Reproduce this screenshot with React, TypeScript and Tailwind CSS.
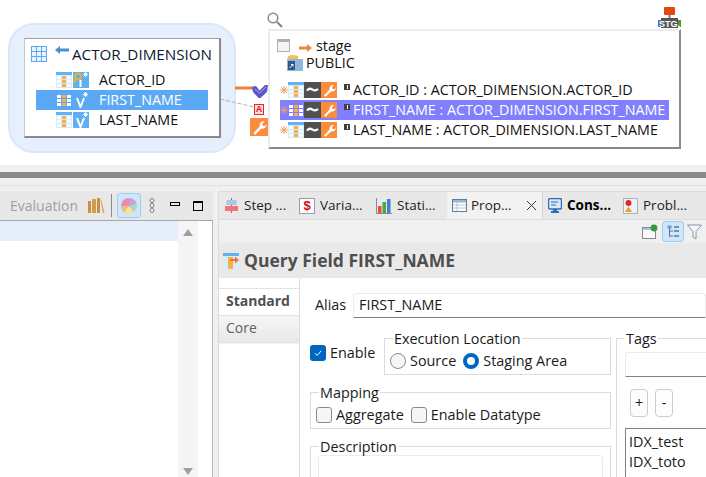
import type { ReactNode } from 'react';

const FONT = "'Open Sans', 'Noto Sans', sans-serif";

function GridIcon({ selected = false }: { selected?: boolean }) {
  return (
    <svg width="16" height="16" viewBox="0 0 16 16" className="shrink-0">
      {!selected && <rect x="0" y="0" width="16" height="16" fill="#d8ecfb" />}
      {!selected && <rect x="0" y="0" width="16" height="3" fill="#62b0ee" />}
      {[3, 7, 11].map((y) =>
        [1, 6, 11].map((x) => (
          <rect key={`${x}-${y}`} x={x} y={y + (selected ? 0 : 1)} width="4" height="3" fill={x === 6 ? '#f5b04c' : selected ? '#ffffff' : '#f7fbfe'} />
        ))
      )}
    </svg>
  );
}

function Wrench({ size = 16 }: { size?: number }) {
  return (
    <svg width={size} height={size} viewBox="0 0 16 16" className="shrink-0">
      <rect width="16" height="16" fill="#fb8c3c" />
      <path d="M3 13.5 L8.6 7.6 C8 5 10 2.6 13 3 L10.8 5.3 L11.6 7 L13.4 7.2 L14.6 5.4 C15 8.2 12.6 10 10 9.4 L4.6 14.8 Z" fill="#ffffff" />
    </svg>
  );
}

function Tilde() {
  return (
    <svg width="17" height="16" viewBox="0 0 17 16" className="shrink-0">
      <rect width="17" height="16" fill="#505050" />
      <path d="M3 8.6 C5 6 7 6.6 8.5 7.6 C10 8.6 12 9 14 7" stroke="#ffffff" strokeWidth="2.2" fill="none" />
    </svg>
  );
}

function BlueV({ selected = false, keyed = false }: { selected?: boolean; keyed?: boolean }) {
  return (
    <svg width="16" height="16" viewBox="0 0 16 16" className="shrink-0">
      {!selected && <rect width="16" height="16" fill="#62aef2" />}
      {keyed ? (
        <g>
          <rect x="6.5" y="8" width="2" height="7" fill="#ffffff" />
          <circle cx="5" cy="4.5" r="3" fill="none" stroke="#e2b43c" strokeWidth="2" />
          <path d="M3 7 L0.6 11" stroke="#e2b43c" strokeWidth="2" />
        </g>
      ) : (
        <path d="M4 6 L7.5 15 L11 6" stroke="#ffffff" strokeWidth="2" fill="none" />
      )}
      <path d="M12.5 0 V5 M10 2.5 H15 M10.8 0.8 L14.2 4.2 M14.2 0.8 L10.8 4.2" stroke="#ffffff" strokeWidth="0.9" />
    </svg>
  );
}

function Star() {
  return (
    <svg width="8" height="8" viewBox="0 0 8 8" className="shrink-0">
      <path d="M4 0 V8 M0 4 H8 M1.2 1.2 L6.8 6.8 M6.8 1.2 L1.2 6.8" stroke="#f59a58" strokeWidth="1" />
    </svg>
  );
}

function TBadge() {
  return (
    <span className="absolute left-[64px] top-[4px] flex h-[6px] w-[6px] items-center justify-center bg-[#404040]">
      <span className="block h-[4px] w-[1px] bg-white" />
    </span>
  );
}

function TargetRow({ label, selected = false }: { label: string; selected?: boolean }) {
  return (
    <div className={`relative flex h-[20px] items-center ${selected ? 'bg-[#8080ff] text-white' : 'text-[#111111]'}`}>
      <Star />
      <div className="flex">
        <GridIcon selected={selected} />
        <Tilde />
        <Wrench />
      </div>
      <TBadge />
      <span className="ml-[16px] whitespace-nowrap">{label}</span>
    </div>
  );
}

function SourceRow({ label, selected = false, keyed = false }: { label: string; selected?: boolean; keyed?: boolean }) {
  return (
    <div className={`flex h-[20px] items-center pl-[20px] ${selected ? 'bg-[#5ba8f5] text-white' : 'text-[#111111]'}`}>
      <GridIcon selected={selected} />
      <span className="ml-[1px]"><BlueV selected={selected} keyed={keyed} /></span>
      <span className="ml-[10px] whitespace-nowrap">{label}</span>
    </div>
  );
}

function Diagram() {
  return (
    <div className="relative h-[165px] bg-white text-[14.3px]">
      {/* source datastore */}
      <div className="absolute left-[8px] top-[23px] h-[130px] w-[228px] rounded-[26px] border-2 border-[#d8e8fa] bg-[#e6f0fc]" />
      <div className="absolute left-[24px] top-[38px] h-[100px] w-[197px] border-b-2 border-l border-r-2 border-t border-b-[#8a8a8a] border-l-[#c8c8c8] border-r-[#8a8a8a] border-t-[#a0a0a0] bg-white">
        <div className="flex h-[31px] items-center pb-[1px] pl-[6px] text-[#0b1c33]">
          <svg width="16" height="16" viewBox="0 0 16 16" className="shrink-0">
            <rect width="16" height="16" fill="#5ba8f5" />
            {[1, 6, 11].map((y) => [1, 6, 11].map((x) => <rect key={`${x}-${y}`} x={x} y={y} width="4" height="4" fill="#eaf4fe" />))}
          </svg>
          <svg width="14" height="10" viewBox="0 0 14 10" className="mb-[6px] ml-[8px] shrink-0">
            <path d="M0 4 L5 0 V2.5 H14 V5.5 H5 V8 Z" fill="#4d8fc9" />
          </svg>
          <span className="ml-[3px] whitespace-nowrap text-[15.2px]">ACTOR_DIMENSION</span>
        </div>
        <div className="mx-[11px]">
          <SourceRow label="ACTOR_ID" keyed />
          <SourceRow label="FIRST_NAME" selected />
          <SourceRow label="LAST_NAME" />
        </div>
      </div>

      {/* links */}
      <svg width="40" height="60" viewBox="0 0 40 60" className="absolute left-[220px] top-[80px]">
        <path d="M15 8 H36" stroke="#f0823c" strokeWidth="3" />
        <path d="M0 19 L34 27" stroke="#b0b0b0" strokeDasharray="4 2" />
      </svg>
      <svg width="16" height="14" viewBox="0 0 16 14" className="absolute left-[252px] top-[84px]">
        <path d="M0 3 L4 2 L7.5 6.5 L13 1 L16 1 L15 8 L8.5 14 H6.5 L1 8 Z" fill="#5d58c8" />
        <path d="M3 5 L7.5 9 L14 3" stroke="#a9a6ea" fill="none" />
      </svg>
      <span className="absolute left-[254px] top-[104px] flex h-[11px] w-[10px] items-center justify-center border border-[#e8252b] bg-[#ffd8d8] font-['Liberation_Sans'] text-[9px] font-bold leading-none text-[#d81c22]">
        A
      </span>
      <span className="absolute left-[250px] top-[118px]"><Wrench size={18} /></span>

      {/* magnifier */}
      <svg width="16" height="16" viewBox="0 0 16 16" className="absolute left-[267px] top-[12px]">
        <circle cx="6" cy="6" r="4.8" fill="#ffffff" stroke="#8c8c8c" strokeWidth="1.6" />
        <path d="M10 10 L15 15" stroke="#8c8c8c" strokeWidth="2.4" />
      </svg>

      {/* stg badge */}
      <svg width="23" height="21" viewBox="0 0 23 21" className="absolute left-[658px] top-[7px]">
        <rect x="6" y="0" width="11" height="8" rx="1" fill="#e2470f" />
        <rect x="10.5" y="8" width="2" height="5" fill="#777777" />
        <rect x="0" y="13" width="6" height="7" fill="#3d7fcc" />
        <rect x="17" y="13" width="6" height="7" fill="#4d9a2c" />
        <rect x="3" y="11" width="17" height="10" fill="#555555" />
        <text x="11.5" y="19.5" textAnchor="middle" fontSize="9" fontWeight="700" fill="#ffffff" fontFamily="Liberation Sans">STG.</text>
      </svg>

      {/* target datastore */}
      <div className="absolute left-[268px] top-[29px] h-[120px] w-[413px] border-2 border-b-[#8a8a8a] border-l-[#ececec] border-r-[#8a8a8a] border-t-[#ececec] bg-white pl-[10px] pt-[2px] text-[#111111]">
        <div className="flex h-[20px] items-center pt-[5px]">
          <span className="ml-[-3px] block h-[13px] w-[13px] border border-t-[3px] border-[#b0b0b0] bg-[#f4f4f4]" />
          <svg width="13" height="8" viewBox="0 0 13 8" className="ml-[9px] mt-[5px]">
            <path d="M0 2.5 H8 V0 L13 4 L8 8 V5.5 H0 Z" fill="#f0853f" />
          </svg>
          <span className="ml-[4px]">stage</span>
        </div>
        <div className="mt-[1px] flex h-[18px] items-center pl-[7px]">
          <svg width="16" height="16" viewBox="0 0 16 16">
            <ellipse cx="6" cy="2.5" rx="5.5" ry="2.5" fill="#f2c14e" />
            <rect x="0" y="4" width="16" height="12" fill="#8fb8dc" />
            <rect x="1" y="6" width="7" height="9" fill="#2b5a8c" />
            <path d="M2.5 13 L6 9.5 M4 9.5 H6 V11.5" stroke="#ffffff" />
          </svg>
          <span className="ml-[3px]">PUBLIC</span>
        </div>
        <div className="mr-[10px] mt-[8px]">
          <TargetRow label="ACTOR_ID : ACTOR_DIMENSION.ACTOR_ID" />
          <TargetRow label="FIRST_NAME : ACTOR_DIMENSION.FIRST_NAME" selected />
          <TargetRow label="LAST_NAME : ACTOR_DIMENSION.LAST_NAME" />
        </div>
      </div>
    </div>
  );
}

function StepIcon() {
  return (
    <svg width="15" height="15" viewBox="0 0 15 15" className="shrink-0">
      <rect x="7" y="0" width="1" height="15" fill="#777777" />
      <rect x="2.5" y="2" width="10" height="5" fill="#aac4ea" />
      <rect x="1" y="8" width="13" height="5" fill="#f2747c" />
    </svg>
  );
}

function LeftToolbar() {
  return (
    <div className="flex h-[30px] items-center border-b border-[#a8a8a8] bg-[#e8e8e8] pl-[10px]">
      <span className="text-[#a0a0a0]">Evaluation</span>
      <svg width="17" height="15" viewBox="0 0 17 15" className="ml-[10px]">
        <rect x="0" y="3" width="3" height="12" fill="#c9913f" />
        <rect x="4" y="1" width="4" height="14" fill="#d39c4c" />
        <rect x="9" y="0" width="3" height="15" fill="#c9913f" />
        <path d="M13 1 L16.5 15 H15 L12.5 2 Z" fill="#d39c4c" />
      </svg>
      <span className="ml-[6px] h-[23px] w-[1px] bg-[#8a8a8a]" />
      <span className="ml-[5px] flex h-[25px] w-[24px] items-center justify-center rounded-[3px] border border-[#9ccdf5] bg-[#cfe6fb]">
        <span className="block h-[16px] w-[16px] rounded-full bg-[conic-gradient(#c9a0dc_0_20%,#a8dcc0_20%_40%,#f5e39a_40%_60%,#ebc078_60%_75%,#e88cb0_75%_100%)]" />
      </span>
      <svg width="6" height="15" viewBox="0 0 6 15" className="ml-[8px]">
        {[2.5, 7.5, 12.5].map((y) => <circle key={y} cx="3" cy={y} r="1.9" fill="#ffffff" stroke="#707070" />)}
      </svg>
      <span className="mb-[4px] ml-[15px] h-[4px] w-[10px] border border-black" />
      <span className="ml-[13px] h-[10px] w-[10px] border border-t-2 border-black" />
    </div>
  );
}

function LeftPanel() {
  return (
    <div className="flex w-[213px] flex-col">
      <LeftToolbar />
      <div className="flex min-h-0 flex-1 border-r border-[#b8b8b8] bg-white">
        <div className="h-[20px] w-[178px] bg-[#e5effb]" />
        <div className="flex h-full w-[20px] flex-col items-center justify-between bg-[#f5f5f5] pb-[2px] pt-[8px]">
          <span className="block h-0 w-0 border-x-[5px] border-b-[7px] border-x-transparent border-b-[#a0a0a0]" />
          <span className="block h-0 w-0 border-x-[5px] border-t-[7px] border-x-transparent border-t-[#a0a0a0]" />
        </div>
      </div>
    </div>
  );
}

function Tab({ icon, label, width, bold = false }: { icon: ReactNode; label: string; width: number; bold?: boolean }) {
  return (
    <div className={`flex shrink-0 items-center pl-[5px] ${bold ? 'font-bold text-black' : 'text-[#222222]'}`} style={{ width }}>
      {icon}
      <span className="ml-[5px] whitespace-nowrap text-[13.5px]">{label}</span>
    </div>
  );
}

function TabBar() {
  return (
    <div className="flex h-[29px] items-stretch border-b border-t border-[#dcdcdc] bg-[#e8e8e8]">
      <Tab width={75} label="Step ..." icon={<StepIcon />} />
      <Tab width={77} label="Varia..." icon={
        <span className="flex h-[16px] w-[16px] items-center justify-center border border-[#9a9ab8] bg-white font-['Liberation_Sans'] text-[13px] font-bold leading-none text-[#d01010]">$</span>
      } />
      <Tab width={76} label="Stati..." icon={
        <svg width="16" height="16" viewBox="0 0 16 16" className="shrink-0">
          <path d="M0.5 0 V15.5 H16" stroke="#888888" fill="none" />
          <rect x="2" y="8" width="3.5" height="7" fill="#e8502a" />
          <rect x="6.5" y="4" width="3.5" height="11" fill="#49a83c" />
          <rect x="11" y="1" width="3.5" height="14" fill="#3f7fd0" />
        </svg>
      } />
      <div className="flex w-[96px] shrink-0 items-center border-r border-[#d4d4d4] bg-[#f2f2f2] pl-[5px] text-[#222222]">
        <svg width="15" height="13" viewBox="0 0 15 13" className="shrink-0">
          <rect x="0.5" y="0.5" width="14" height="12" fill="#ffffff" stroke="#5f7a9a" />
          <rect x="1" y="1" width="13" height="2.5" fill="#9fb6d0" />
          <path d="M1 6 H14 M1 9 H14 M5 3 V12" stroke="#b4c4d6" />
        </svg>
        <span className="ml-[4px] whitespace-nowrap text-[13.5px]">Prop...</span>
        <svg width="11" height="11" viewBox="0 0 11 11" className="ml-[14px] shrink-0">
          <path d="M1 1 L10 10 M10 1 L1 10" stroke="#333333" />
        </svg>
      </div>
      <Tab width={75} bold label="Cons..." icon={
        <svg width="14" height="15" viewBox="0 0 14 15" className="shrink-0">
          <rect x="0.5" y="0.5" width="13" height="10.5" rx="1.5" fill="#dbe8f6" stroke="#2f6fb5" strokeWidth="1.4" />
          <path d="M3 4 H10 M3 7 H8" stroke="#2f6fb5" />
          <path d="M5 11 H9 V13 H11 V15 H3 V13 H5 Z" fill="#2f6fb5" />
        </svg>
      } />
      <Tab width={70} label="Probl..." icon={
        <svg width="15" height="16" viewBox="0 0 15 16" className="shrink-0">
          <rect x="0.5" y="0.5" width="14" height="15" fill="#eef2f7" stroke="#a8b4c4" />
          <circle cx="5.5" cy="5" r="3" fill="#dc2a2a" />
          <path d="M2 14 L5.5 8.5 L9 14 Z" fill="#f0a020" />
        </svg>
      } />
    </div>
  );
}

function Group({ label, className = '', children }: { label: string; className?: string; children: ReactNode }) {
  return (
    <fieldset className={`border border-[#dcdcdc] ${className}`}>
      <legend className="ml-[8px] px-[1px] leading-[15px]">{label}</legend>
      {children}
    </fieldset>
  );
}

function Check({ label, checked = false }: { label: string; checked?: boolean }) {
  return (
    <span className="flex items-center">
      {checked ? (
        <span className="flex h-[16px] w-[16px] items-center justify-center rounded-[3px] bg-[#0067c0]">
          <svg width="10" height="10" viewBox="0 0 10 10">
            <path d="M2 5.2 L4.2 7.4 L8.2 2.8" stroke="#ffffff" fill="none" />
          </svg>
        </span>
      ) : (
        <span className="block h-[16px] w-[16px] rounded-[3px] border border-[#8a8a8a] bg-[#f6f6f6]" />
      )}
      <span className="ml-[4px] whitespace-nowrap">{label}</span>
    </span>
  );
}

function Radio({ label, checked = false }: { label: string; checked?: boolean }) {
  return (
    <span className="flex items-center">
      {checked ? (
        <span className="block h-[16px] w-[16px] rounded-full border-[4px] border-[#0067c0] bg-white" />
      ) : (
        <span className="block h-[16px] w-[16px] rounded-full border border-[#8a8a8a] bg-[#f6f6f6]" />
      )}
      <span className="ml-[4px] whitespace-nowrap">{label}</span>
    </span>
  );
}

function SmallButton({ label }: { label: string }) {
  return (
    <span className="flex h-[28px] w-[18px] items-center justify-center rounded-[4px] border border-[#cccccc] bg-[#fdfdfd]">
      {label}
    </span>
  );
}

function PropertiesForm() {
  return (
    <div className="min-w-0 flex-1 overflow-hidden border-l border-[#dcdcdc] pl-[10px] pt-[15px] text-[14.4px] text-[#1a1a1a]">
      <div className="flex h-[24px] items-center">
        <span className="w-[43px] pl-[5px]">Alias</span>
        <div className="flex h-[25px] flex-1 items-center rounded-t-[3px] border border-x-[#ececec] border-b-[#808080] border-t-[#ececec] pl-[5px]">
          FIRST_NAME
        </div>
      </div>
      <div className="mt-[14px] flex w-[500px] gap-[5px]">
        <div className="w-[301px] shrink-0">
          <div className="flex items-start">
            <span className="mt-[11px] w-[74px]"><Check label="Enable" checked /></span>
            <Group label="Execution Location" className="h-[44px] w-[227px]">
              <div className="flex gap-[7px] pl-[5px] pt-[4px]">
                <Radio label="Source" />
                <Radio label="Staging Area" checked />
              </div>
            </Group>
          </div>
          <Group label="Mapping" className="mt-[10px] h-[44px]">
            <div className="flex gap-[7px] pl-[5px] pt-[4px]">
              <Check label="Aggregate" />
              <Check label="Enable Datatype" />
            </div>
          </Group>
          <Group label="Description" className="mt-[10px] h-[60px]">
            <div className="mx-[7px] mt-[1px] h-[40px] rounded-t-[3px] border border-[#ececec]" />
          </Group>
        </div>
        <Group label="Tags" className="w-[200px]">
          <div className="ml-[8px] mt-[6px] h-[25px] rounded-t-[3px] border border-x-[#ececec] border-b-[#808080] border-t-[#ececec]" />
          <div className="ml-[13px] mt-[12px] flex gap-[7px]">
            <SmallButton label="+" />
            <SmallButton label="-" />
          </div>
          <div className="ml-[8px] mt-[11px] h-[60px] border border-[#808080] pl-[3px] pt-[3px] leading-[20px]">
            <div>IDX_test</div>
            <div>IDX_toto</div>
          </div>
        </Group>
      </div>
    </div>
  );
}

function RightPanel() {
  return (
    <div className="ml-[5px] flex min-w-0 flex-1 flex-col border-l border-[#dcdcdc]">
      <TabBar />
      <div className="flex h-[23px] items-center justify-end bg-[#f0f0f0] pr-[4px]">
        <svg width="16" height="15" viewBox="0 0 16 15">
          <rect x="0.5" y="3.5" width="13" height="11" fill="#fafafa" stroke="#8a8a8a" />
          <rect x="1" y="4" width="12" height="2" fill="#a8c4e4" />
          <circle cx="12" cy="4" r="3.4" fill="#3c9a3c" />
        </svg>
        <span className="ml-[4px] flex h-[21px] w-[22px] items-center justify-center rounded-[3px] border border-[#9ccdf5] bg-[#cfe6fb]">
          <svg width="12" height="13" viewBox="0 0 12 13">
            <path d="M2.5 1 V12 M2.5 6 H6 M2.5 11 H6" stroke="#5a7a9a" fill="none" />
            <rect x="0.5" y="0.5" width="4" height="3" fill="#6f9ac4" />
            <path d="M7 2 H12 M7 6 H12 M7 11 H12" stroke="#5a7a9a" strokeWidth="1.4" />
          </svg>
        </span>
        <svg width="15" height="16" viewBox="0 0 15 16" className="ml-[3px]">
          <path d="M0.5 1 H14.5 L9 7.5 V15 L6 13 V7.5 Z" fill="#f8f8f8" stroke="#7d98b4" />
        </svg>
      </div>
      <div className="flex h-[35px] items-center bg-[#e9e9e9] pl-[4px]">
        <svg width="16" height="16" viewBox="0 0 16 16" className="shrink-0">
          <rect width="16" height="16" fill="#d8ecfb" />
          <rect width="16" height="3" fill="#62b0ee" />
          <rect x="5" y="4" width="5" height="12" fill="#f5b04c" />
          <path d="M7 6 H12 V3.5 L16 7 L12 10.5 V8 H7 Z" fill="#f0762c" />
        </svg>
        <span className="ml-[5px] whitespace-nowrap text-[17.5px] font-bold text-[#4f4f4f]">Query Field FIRST_NAME</span>
      </div>
      <div className="flex min-h-0 flex-1 bg-white">
        <div className="w-[80px] shrink-0 pt-[10px]">
          <div className="flex h-[27px] items-center border-t border-[#e4e4e4] pb-[3px] pl-[7px] font-bold text-[#505050]">Standard</div>
          <div className="flex h-[27px] items-center border-t border-[#e0e0e0] bg-gradient-to-b from-[#f6f6f6] to-[#e8e8e8] pb-[3px] pl-[7px] text-[#606060] shadow-[0_1px_2px_#d8d8d8]">Core</div>
        </div>
        <PropertiesForm />
      </div>
    </div>
  );
}

export default function App() {
  return (
    <div className="h-[477px] w-[706px] overflow-hidden bg-[#f0f0f0] text-[14px]" style={{ fontFamily: FONT }}>
      <Diagram />
      <div className="mt-[7px] h-[6px] bg-[#8a8a8a]" />
      <div className="mt-[7px] border-t border-[#e0e0e0] pt-[5px]">
        <div className="flex h-[286px]">
          <LeftPanel />
          <RightPanel />
        </div>
      </div>
    </div>
  );
}
